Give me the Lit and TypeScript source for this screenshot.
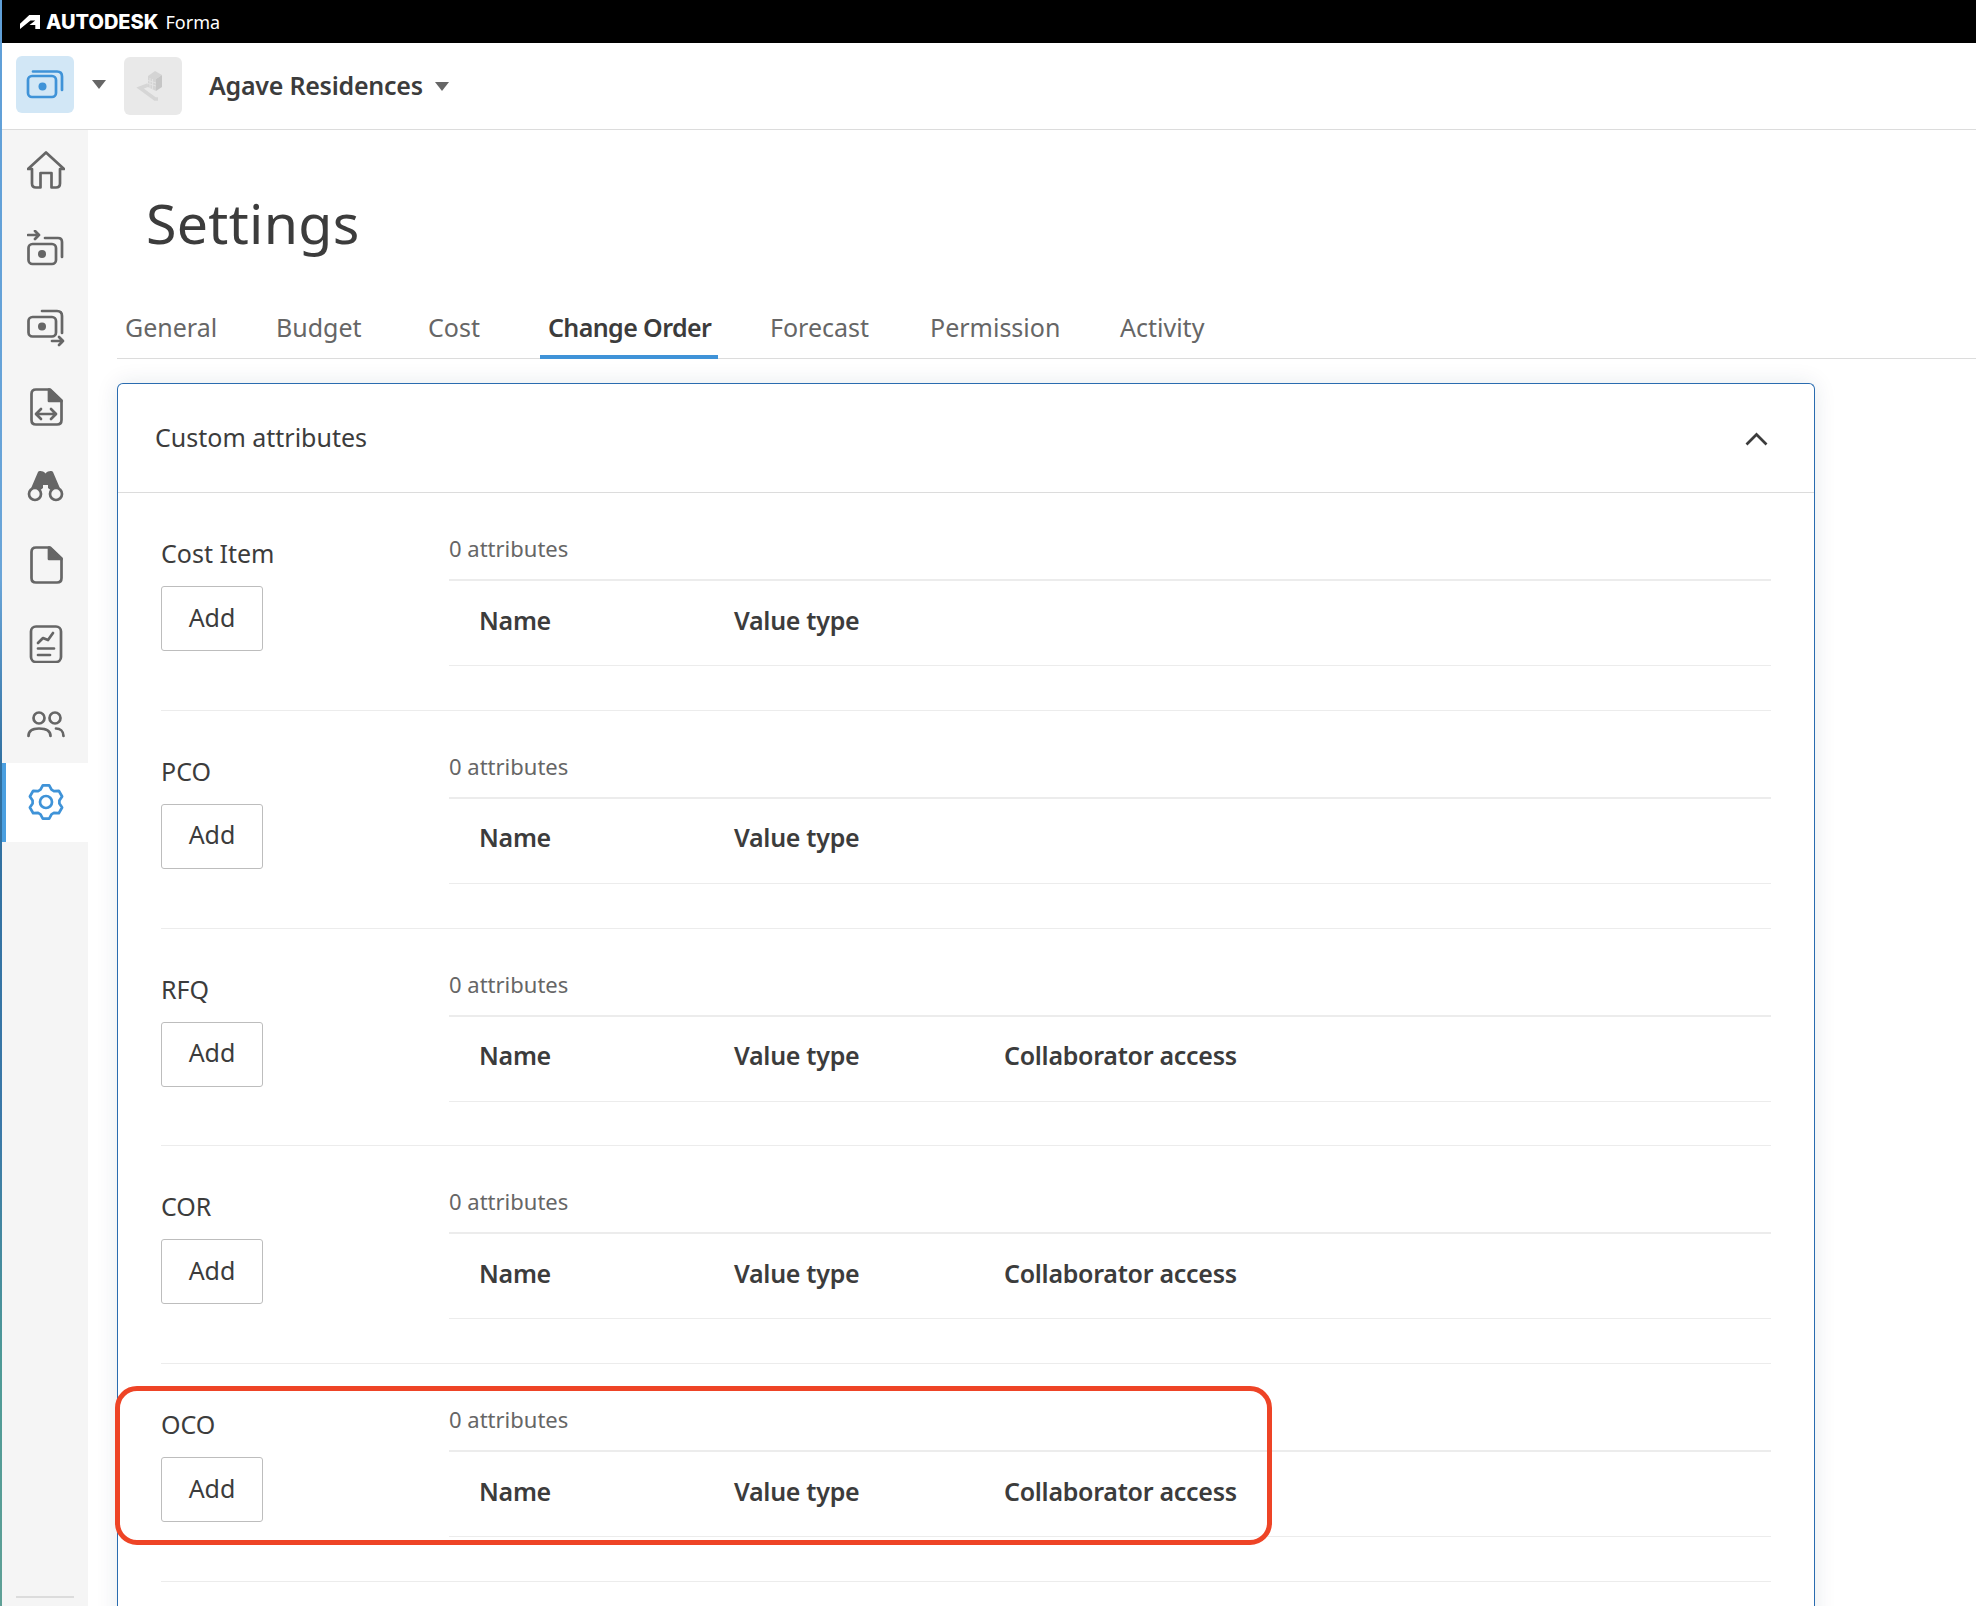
import { LitElement, html, css, svg } from 'lit';
import { customElement } from 'lit/decorators.js';

const stackFront = svg`<rect x="2" y="10" width="28" height="21" rx="4"/><circle cx="16.5" cy="20.5" r="4" fill="currentColor" stroke="none"/><path d="M7 5.5H31Q36 5.5 36 10.5V24"/>`;

// six lobed gear outline, around 19,19
function gearPath() {
  const pts: string[] = [];
  for (let k = 0; k < 6; k++) {
    const a = (k * 60 - 90) * Math.PI / 180;
    const p = (r: number, d: number) => {
      const t = a + d * Math.PI / 180;
      return `${(19 + r * Math.cos(t)).toFixed(1)} ${(19 + r * Math.sin(t)).toFixed(1)}`;
    };
    pts.push(p(13.5, -24), p(17, -11), p(17, 11), p(13.5, 24));
  }
  return 'M' + pts.join('L') + 'Z';
}

const navIcons = [
  svg`<path d="M1 18L19 1.5L37 18H33V32.5Q33 36.5 29 36.5H24.5V22H13.5V36.5H9Q5 36.5 5 32.5V18Z"/>`,
  svg`<rect x="1.5" y="14" width="27.5" height="20" rx="4"/><circle cx="15" cy="24" r="4" fill="currentColor" stroke="none"/><path d="M18 8H31Q35 8 35 12V27M1 5H12M8 1L12 5L8 9"/>`,
  svg`<rect x="1.5" y="8" width="27.5" height="19.5" rx="4"/><circle cx="15" cy="17.5" r="4" fill="currentColor" stroke="none"/><path d="M15 2H30Q35 2 35 7V24M25 32H36M32 28L36 32L32 36"/>`,
  svg`<path d="M9 1.5H23L34.5 12.5V32Q34.5 36.5 30 36.5H9Q4.5 36.5 4.5 32V6Q4.5 1.5 9 1.5Z"/><path d="M22 1.5L34.5 13H22Z" fill="currentColor"/><path d="M10 26H28M14 21L9 26L14 31M24 21L29 26L24 31"/>`,
  svg`<path d="M11 5C12 3.5 16 3.5 18.5 6.5C21 3.5 25 3.5 26 5L35 26L31 21Q26 20 23.5 23L21 21V18H16V21L13.5 23Q10 20 6 21L2 26Z" fill="currentColor" stroke="none"/><circle cx="8" cy="27" r="6" fill="#f5f5f5"/><circle cx="29" cy="27" r="6" fill="#f5f5f5"/>`,
  svg`<path d="M9 1.5H23L34.5 12.5V32Q34.5 36.5 30 36.5H9Q4.5 36.5 4.5 32V6Q4.5 1.5 9 1.5Z"/><path d="M22 1.5L34.5 13H22Z" fill="currentColor"/>`,
  svg`<rect x="4" y="1.5" width="30" height="35.5" rx="5"/><path d="M11 18L16 13L21 15L26 8M11 23.5H27M11 30H23"/>`,
  svg`<circle cx="12" cy="14" r="5.5"/><circle cx="28" cy="14" r="5.5"/><path d="M1.5 32C1.5 26 6 24.5 12 24.5C18 24.5 23.5 26 23.5 32M29 24.5C33 24.5 36.5 27 36.5 32"/>`,
  svg`<path d=${gearPath()}/><circle cx="19" cy="19" r="6"/>`,
];

const tabs = ['General', 'Budget', 'Cost', 'Change Order', 'Forecast', 'Permission', 'Activity'];
const sections = [
  { name: 'Cost Item', collab: false },
  { name: 'PCO', collab: false },
  { name: 'RFQ', collab: true },
  { name: 'COR', collab: true },
  { name: 'OCO', collab: true },
];

@customElement('app-root')
export class AppRoot extends LitElement {
  static styles = css`
    :host {
      display: flex;
      position: relative;
      width: 1976px;
      height: 1606px;
      overflow: hidden;
      background: #fff;
      color: #3c3c3c;
      font-family: "Noto Sans", sans-serif;
    }
    .strip {
      width: 2px;
      flex: none;
      background: linear-gradient(#5f9fd8 0%, #6aa5d8 36%, #2f6f9f 48%, #3a78a8 70%, #4e9a96 85%, #5fa096 100%);
    }
    .main {
      flex: 1;
      min-width: 0;
      display: flex;
      flex-direction: column;
    }
    .topbar {
      height: 43px;
      flex: none;
      background: #000;
      color: #fff;
      display: flex;
      align-items: center;
      padding-left: 18px;
    }
    .logo { width: 20px; height: 14px; fill: #fff; margin-right: 6px; }
    .brand { font-family: "Inter", sans-serif; font-weight: 800; font-size: 20px; }
    .product { font-size: 18px; margin-left: 7px; }
    .header {
      height: 87px;
      flex: none;
      box-sizing: border-box;
      border-bottom: 1px solid #dcdcdc;
      display: flex;
      align-items: center;
      padding-left: 14px;
    }
    .switch {
      width: 58px;
      height: 57px;
      margin-top: -3px;
      border-radius: 6px;
      background: #d2e7f6;
      color: #3f93d8;
      display: flex;
      align-items: center;
      justify-content: center;
    }
    .caret {
      width: 0;
      height: 0;
      border-left: 7px solid transparent;
      border-right: 7px solid transparent;
      border-top: 9px solid #666;
    }
    .switch + .caret { margin: -3px 0 0 18px; }
    .thumb {
      width: 58px;
      height: 58px;
      margin-left: 18px;
      border-radius: 6px;
      background: #e9e9e9;
      display: flex;
      align-items: center;
      justify-content: center;
    }
    .project {
      margin: -2px 0 0 27px;
      font-size: 25px;
      font-weight: 600;
      letter-spacing: -0.25px;
    }
    .project + .caret { margin-left: 12px; }
    .body { flex: 1; min-height: 0; display: flex; }
    .nav {
      width: 86px;
      flex: none;
      padding-top: 1px;
      background: #f5f5f5;
      display: flex;
      flex-direction: column;
    }
    .nav-item {
      height: 79px;
      flex: none;
      box-sizing: border-box;
      color: #666;
      display: flex;
      align-items: center;
      justify-content: center;
    }
    .nav-item svg { margin: -2px 0 0 2px; }
    .nav-item.active {
      background: #fff;
      border-left: 4px solid #4a9fe0;
      color: #3f93d8;
      padding-right: 2px;
    }
    .nav-item.active svg { margin-left: 0; }
    .nav-end {
      margin: auto 14px 8px;
      height: 2px;
      background: #dcdcdc;
    }
    svg.icon {
      width: 38px;
      height: 38px;
      fill: none;
      stroke: currentColor;
      stroke-width: 2.7;
      stroke-linejoin: round;
      stroke-linecap: round;
    }
    .content { flex: 1; min-width: 0; padding-top: 56px; }
    h1 {
      margin: 0 0 0 58px;
      font-size: 55.5px;
      line-height: 74px;
      font-weight: 400;
      letter-spacing: 0.3px;
    }
    .tabs {
      margin: 40px 0 0 29px;
      display: grid;
      grid-template-columns: 151px 152px 120px 222px 160px 190px auto;
      border-bottom: 1px solid #dcdcdc;
    }
    .tab {
      justify-self: start;
      box-sizing: border-box;
      height: 59px;
      padding: 0 8px;
      margin-bottom: -1px;
      font-size: 25px;
      line-height: 54px;
      color: #666;
      white-space: nowrap;
    }
    .tab.active {
      width: 178px;
      color: #3c3c3c;
      font-weight: 600;
      letter-spacing: -0.6px;
      border-bottom: 4px solid #3f93d8;
    }
    .card {
      margin: 24px 0 0 29px;
      width: 1698px;
      padding-bottom: 120px;
      box-sizing: border-box;
      border: 1px solid #2a6cb0;
      border-bottom: none;
      border-radius: 6px 6px 0 0;
      box-shadow: 0 0 22px rgba(20, 50, 80, 0.1);
    }
    .card-head {
      height: 109px;
      box-sizing: border-box;
      border-bottom: 1px solid #dcdcdc;
      display: flex;
      align-items: center;
      justify-content: space-between;
      padding: 0 46px 0 37px;
      font-size: 25px;
    }
    .card-head span { margin-top: -2px; }
    .chev { width: 23px; height: 14px; margin-top: 2px; fill: none; stroke: #3c3c3c; stroke-width: 2.7; }
    .section {
      margin: 0 43px 0 43px;
      height: 217.8px;
      box-sizing: border-box;
      border-bottom: 1px solid #ececec;
      display: flex;
    }
    .left { width: 288px; flex: none; padding-top: 45px; }
    .label { font-size: 25px; line-height: 30px; }
    button {
      display: block;
      width: 102px;
      height: 65px;
      margin-top: 18px;
      padding: 0 0 4px;
      box-sizing: border-box;
      background: #fff;
      border: 1px solid #bdbdbd;
      border-radius: 3px;
      color: #3c3c3c;
      font: 25px "Noto Sans", sans-serif;
    }
    .right { flex: 1; padding-top: 40px; }
    .count {
      font-size: 22px;
      line-height: 30px;
      color: #666;
      padding-bottom: 16px;
      border-bottom: 2px solid #ececec;
    }
    .cols {
      height: 85px;
      box-sizing: border-box;
      border-bottom: 1px solid #ececec;
      display: grid;
      grid-template-columns: 255px 270px 1fr;
      align-items: center;
      padding: 0 0 7px 30px;
      font-size: 25px;
      font-weight: 600;
      letter-spacing: -0.28px;
    }
    .callout {
      position: absolute;
      left: 115px;
      top: 1386px;
      width: 1157px;
      height: 159px;
      box-sizing: border-box;
      border: 5px solid #ee4426;
      border-radius: 22px;
    }
  `;

  render() {
    return html`
      <div class="strip"></div>
      <div class="main">
        <div class="topbar">
          <svg class="logo" viewBox="0 0 20 14"><path d="M0 14V8.7L9.3 0H20V14H15.3V10H9.5L15.3 5.5H10.5L0 14Z"/></svg>
          <span class="brand">AUTODESK</span><span class="product">Forma</span>
        </div>
        <div class="header">
          <div class="switch"><svg class="icon" viewBox="0 0 38 38">${stackFront}</svg></div>
          <div class="caret"></div>
          <div class="thumb">
            <svg width="40" height="40" viewBox="0 0 40 40">
              <path d="M15 19L7 22L22 33H25" fill="none" stroke="#d6d6d6" stroke-width="3.5"/>
              <path d="M15 10L22 5L29 9L23 13V25L15 21Z" fill="#d4d4d4"/>
              <path d="M23 13L29 9V21L23 25Z" fill="#c6c6c6"/>
              <path d="M17 12V22M19.5 13V23.5M15 14.5L23 17M15 17.5L23 20" stroke="#e6e6e6" stroke-width="0.8" fill="none"/>
            </svg>
          </div>
          <span class="project">Agave Residences</span>
          <div class="caret"></div>
        </div>
        <div class="body">
          <div class="nav">
            ${navIcons.map((ic, i) => html`
              <div class="nav-item ${i === navIcons.length - 1 ? 'active' : ''}">
                <svg class="icon" viewBox="0 0 38 38">${ic}</svg>
              </div>`)}
            <div class="nav-end"></div>
          </div>
          <div class="content">
            <h1>Settings</h1>
            <div class="tabs">
              ${tabs.map((t) => html`<div class="tab ${t === 'Change Order' ? 'active' : ''}">${t}</div>`)}
            </div>
            <div class="card">
              <div class="card-head">
                <span>Custom attributes</span>
                <svg class="chev" viewBox="0 0 23 14"><path d="M1.5 12.5L11.5 2.5L21.5 12.5"/></svg>
              </div>
              ${sections.map((s) => html`
                <div class="section">
                  <div class="left">
                    <div class="label">${s.name}</div>
                    <button>Add</button>
                  </div>
                  <div class="right">
                    <div class="count">0 attributes</div>
                    <div class="cols">
                      <span>Name</span><span>Value type</span>
                      ${s.collab ? html`<span>Collaborator access</span>` : ''}
                    </div>
                  </div>
                </div>`)}
            </div>
          </div>
        </div>
      </div>
      <div class="callout"></div>
    `;
  }
}
